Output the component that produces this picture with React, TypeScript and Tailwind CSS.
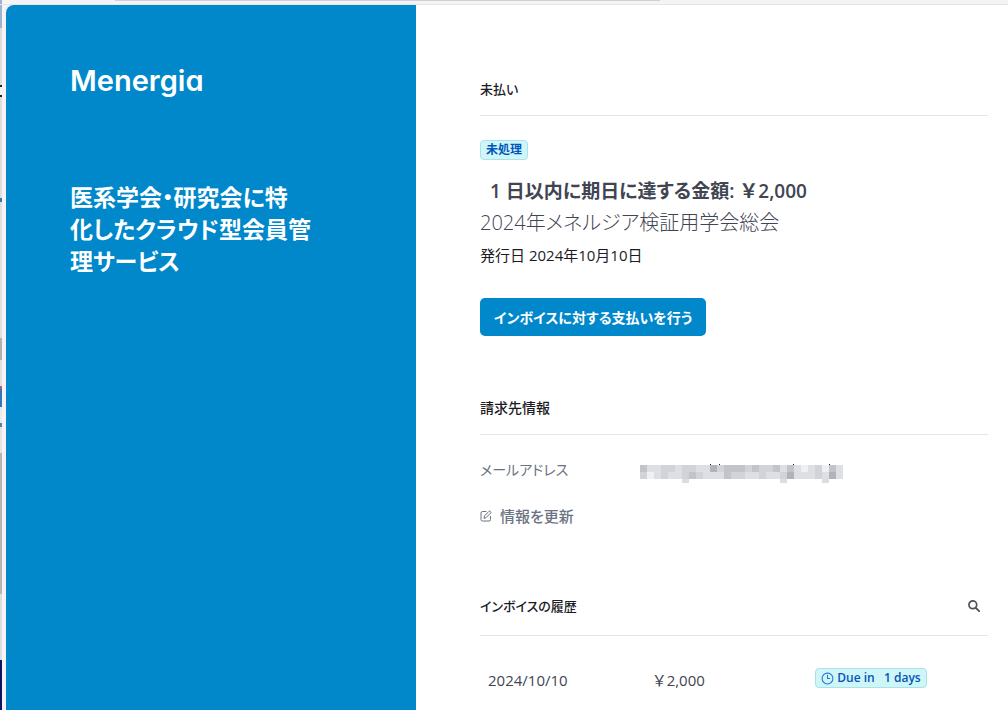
import { Clock3 } from 'lucide-react'
import type { ReactNode } from 'react'

// one character per 7px block, looked up in SHADES
const MASK_ROWS = [
  'dbbccbccbbecdddcdccdbdbabcadb',
  'cabcbbcdcbbbdccbbcbbcebbbcbeb',
]
const SHADES: Record<string, string> = {
  a: '#f0f0f4',
  b: '#dedfe4',
  c: '#d2d3d9',
  d: '#c3c3ca',
  e: '#b2b2ba',
}

// sliver of the window behind, top to bottom
const EDGE = [
  { height: 28, color: '#9db4d0' },
  { height: 57, color: '#deddd9' },
  { height: 2, color: '#222222' },
  { height: 8, color: '#f2f2f2' },
  { height: 2, color: '#222222' },
  { height: 101, color: '#deddd9' },
  { height: 4, color: '#3d76ab' },
  { height: 136, color: '#e0dfdb' },
  { height: 22, color: '#b3b2ae' },
  { height: 26, color: '#e0dfdb' },
  { height: 3, color: '#b85a68' },
  { height: 18, color: '#3278b4' },
  { height: 16, color: '#eaeaea' },
  { height: 4, color: '#4b82b0' },
  { height: 26, color: '#e5e4e0' },
  { height: 141, color: '#b6b5b0' },
  { height: 66, color: '#dddde0' },
  { height: 50, color: '#0d1464' },
]

function WindowEdge() {
  return (
    <div className="w-[6px] shrink-0">
      <div className="w-[2px]">
        {EDGE.map((part, i) => (
          <div key={i} style={{ height: part.height, background: part.color }} />
        ))}
      </div>
    </div>
  )
}

function MaskedEmail() {
  return (
    <svg width="203" height="19" viewBox="0 0 203 19" shapeRendering="crispEdges">
      {MASK_ROWS.map((row, y) =>
        row.split('').map((shade, x) => (
          <rect key={`${x}-${y}`} x={x * 7} y={1 + y * 7} width="7" height="7" fill={SHADES[shade]} />
        )),
      )}
      {[42, 140, 182].map((x) => (
        <rect key={x} x={x} y="15" width="7" height="4" fill="#dddde0" />
      ))}
      {[70, 79, 153, 189].map((x) => (
        <rect key={x} x={x} y="0" width="1" height="1" fill="#1a1b25" />
      ))}
    </svg>
  )
}

function EditIcon() {
  return (
    <svg width="12" height="12" viewBox="0 0 12 12" fill="none" stroke="#6a7383" strokeLinejoin="round" strokeLinecap="round">
      <path d="M6 1.5H2.5A1.5 1.5 0 0 0 1 3v6.5A1.5 1.5 0 0 0 2.5 11H9a1.5 1.5 0 0 0 1.500-1.500V6.500" />
      <path d="M4 8l.5-2.200L9 1.300a.9.9 0 0 1 1.300 0l.4.4a.9.9 0 0 1 0 1.300L6.200 7.500z" />
    </svg>
  )
}

function SearchIcon() {
  return (
    <svg width="12" height="12" viewBox="0 0 12 12" fill="none" stroke="#50525c" strokeLinecap="round">
      <circle cx="4.800" cy="4.800" r="3.900" strokeWidth="1.700" />
      <path d="M7.800 7.800l3.300 3.300" strokeWidth="1.900" />
    </svg>
  )
}

function Badge({ children }: { children: ReactNode }) {
  return (
    <span className="inline-flex h-5 items-center whitespace-pre rounded border border-[#a5e3ee] bg-[#cff5f6] px-[5px] text-xs font-semibold text-[#0055bc]">
      {children}
    </span>
  )
}

export default function App() {
  return (
    <div className="flex min-h-screen flex-col overflow-hidden bg-[#f5f3f5] font-['Open_Sans','Noto_Sans_CJK_JP',sans-serif] text-[#1a1b25] [font-feature-settings:'palt']">
      <div className="absolute inset-x-0 top-0 flex h-[5px] border-b border-[#e6e6e6]">
        <div className="ml-[115px] h-px w-[545px] bg-[#d2d0d2]" />
      </div>
      <div className="flex h-screen grow">
        <WindowEdge />
        <div className="mt-[5px] flex grow overflow-hidden rounded-tl-lg bg-white">
          <aside className="w-[410px] shrink-0 bg-[#0088cb] px-16 pt-14 text-white">
            <div className="font-['Inter',sans-serif] text-[29px] leading-10 font-semibold [font-feature-settings:'cv11']">
              Menergia
            </div>
            <p className="mt-20 text-[23px] leading-8 font-semibold">
              医系学会・研究会に特
              <br />
              化したクラウド型会員管
              <br />
              理サービス
            </p>
          </aside>

          <main className="grow pt-[74px] pr-5 pl-16">
            <section>
              <h2 className="border-b border-[#e3e5e8] pb-4 text-[13px] leading-5 font-medium">未払い</h2>
              <div className="mt-6 flex">
                <Badge>未処理</Badge>
              </div>
              <p className="mt-[15px] pl-[10px] text-[19px] leading-8 font-semibold text-[#414552]">
                1 日以内に期日に達する金額: <span className="[font-feature-settings:normal]">￥2,000</span>
              </p>
              <p className="text-[20px] leading-8 font-light text-[#414552]">2024年メネルジア検証用学会総会</p>
              <p className="text-[15px] leading-8">発行日 2024年10月10日</p>
              <button className="mt-[27px] h-[38px] rounded-[5px] bg-[#0088cb] px-[14px] text-[14px] font-bold text-white">
                インボイスに対する支払いを行う
              </button>
            </section>

            <section className="mt-[62px]">
              <h2 className="border-b border-[#e3e5e8] pb-4 text-[14px] leading-5 font-medium">請求先情報</h2>
              <dl className="mt-[23px] flex h-6 items-center leading-6">
                <dt className="w-40 text-[14px] text-[#6a7383]">メールアドレス</dt>
                <dd className="pt-[7px]">
                  <MaskedEmail />
                </dd>
              </dl>
              <button className="mt-[22px] flex items-center gap-2 text-[15px] leading-6 font-medium text-[#6a7383]">
                <EditIcon />
                情報を更新
              </button>
            </section>

            <section className="mt-[68px]">
              <div className="flex items-center justify-between border-b border-[#e3e5e8] pr-2 pb-[19px]">
                <h2 className="text-[13px] leading-5 font-medium">インボイスの履歴</h2>
                <button aria-label="検索">
                  <SearchIcon />
                </button>
              </div>
              <table className="mt-8 w-full table-fixed text-left text-[15px] leading-6 text-[#414552]">
                <tbody>
                  <tr>
                    <td className="w-[33%] pl-2">2024/10/10</td>
                    <td className="w-[33%] pl-1">
                      <span className="[font-feature-settings:normal]">￥2,000</span>
                    </td>
                    <td className="align-top">
                      <div className="flex">
                        <Badge>
                          <Clock3 className="mr-[3px] size-[13px] text-[#2378cf]" />
                          Due in   1 days
                        </Badge>
                      </div>
                    </td>
                  </tr>
                </tbody>
              </table>
            </section>
          </main>
        </div>
      </div>
    </div>
  )
}
